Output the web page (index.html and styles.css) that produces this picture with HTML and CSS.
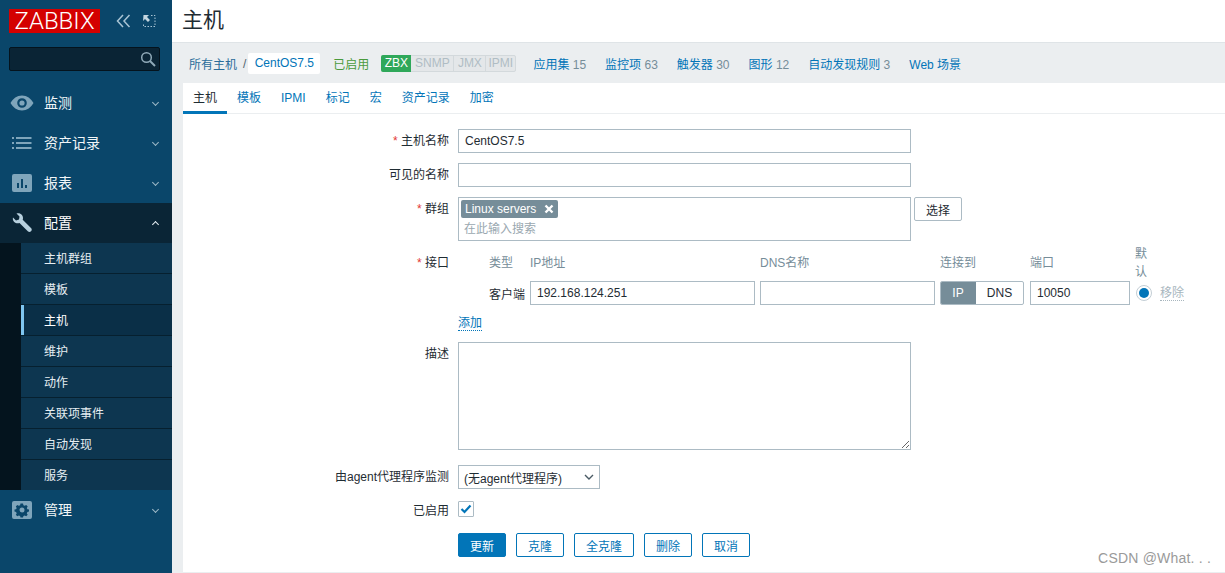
FILE: index.html
```html
<!DOCTYPE html>
<html lang="zh">
<head>
<meta charset="utf-8">
<title>主机</title>
<link rel="stylesheet" href="styles.css">
</head>
<body>
<div class="app">
  <aside class="sidebar">
    <div class="brand">
      <div class="logo">ZABBIX</div>
      <svg class="brand-icon collapse" width="15" height="14" viewBox="0 0 15 14"><path d="M7 1 1.500 7 7 13M13.500 1 8 7l5.500 6" fill="none" stroke="#a9c4d4" stroke-width="1.500"/></svg>
      <svg class="brand-icon expand" width="14" height="14" viewBox="0 0 14 14"><path d="M1.500 1 7 1 5 3 8 6 6 8 3 5 1 7Z" fill="#c4d6e0"/><path d="M9 1.500h4v11H1.500V9" fill="none" stroke="#a9c4d4" stroke-dasharray="1.500 1.500"/></svg>
    </div>
    <div class="search">
      <svg width="16" height="16" viewBox="0 0 16 16"><circle cx="6.500" cy="6.500" r="4.800" fill="none" stroke="#8fa9b8" stroke-width="1.500"/><path d="M10 10l5 5" stroke="#8fa9b8" stroke-width="2"/></svg>
    </div>
    <nav class="menu">
      <div class="menu-item">
        <svg class="menu-icon" width="24" height="18" viewBox="0 0 24 18"><path fill-rule="evenodd" d="M12 1.500c5 0 9 3 11.500 7.500C21 13.500 17 16.500 12 16.500S3 13.500 .5 9C3 4.500 7 1.500 12 1.500Zm0 2.700a4.800 4.800 0 1 0 0 9.600 4.800 4.800 0 0 0 0-9.600Z" fill="#7fa5bb"/><circle cx="12" cy="9" r="2.600" fill="#7fa5bb"/></svg>
        <span>监测</span><i class="chev"></i>
      </div>
      <div class="menu-item">
        <svg class="menu-icon" width="24" height="18" viewBox="0 0 24 18"><path d="M2 3h2v2H2zM2 8h2v2H2zM2 13h2v2H2zM6 3h15.500v2H6zM6 8h15.500v2H6zM6 13h15.500v2H6z" fill="#7fa5bb"/></svg>
        <span>资产记录</span><i class="chev"></i>
      </div>
      <div class="menu-item">
        <svg class="menu-icon" width="24" height="18" viewBox="0 0 24 18"><path fill-rule="evenodd" d="M4 0h16a2 2 0 0 1 2 2v14a2 2 0 0 1-2 2H4a2 2 0 0 1-2-2V2a2 2 0 0 1 2-2Zm3 9v5h2V9Zm4-4v9h2V5Zm4 6v3h2v-3Z" fill="#7fa5bb"/></svg>
        <span>报表</span><i class="chev"></i>
      </div>
      <div class="menu-item open">
        <svg class="menu-icon" width="24" height="20" viewBox="0 0 20 20"><path d="M1 4.500 4 7.500 7 6.500 7.500 3.500 4.500.5C7.500-.5 11 1.500 11 5c0 .7-.1 1.200-.3 1.800l8.300 8.200c1 1 1 2.300 0 3.200-.9 1-2.200 1-3.200 0L7.500 10c-.6.200-1.100.3-1.800.3C2.500 10.300.2 7.500 1 4.500Z" fill="#b7d0de"/></svg>
        <span>配置</span><i class="chev up"></i>
      </div>
      <div class="submenu">
        <div class="sub-item">主机群组</div>
        <div class="sub-item">模板</div>
        <div class="sub-item active">主机</div>
        <div class="sub-item">维护</div>
        <div class="sub-item">动作</div>
        <div class="sub-item">关联项事件</div>
        <div class="sub-item">自动发现</div>
        <div class="sub-item">服务</div>
      </div>
      <div class="menu-item">
        <svg class="menu-icon" width="24" height="18" viewBox="0 0 24 18"><path fill-rule="evenodd" d="M4 0h16a2 2 0 0 1 2 2v14a2 2 0 0 1-2 2H4a2 2 0 0 1-2-2V2a2 2 0 0 1 2-2Zm6.500 2.500-.4 1.700-1.300.6-1.500-.9-1.500 1.500.9 1.500-.6 1.300-1.600.4v2l1.600.5.6 1.300-.9 1.400 1.500 1.500 1.500-.9 1.300.6.4 1.500h2.500l.4-1.500 1.300-.6 1.500.9 1.500-1.500-.9-1.400.6-1.300 1.600-.5v-2l-1.600-.4-.6-1.300.9-1.500-1.500-1.500-1.500.9-1.300-.6-.4-1.700ZM12 6.500a2.500 2.500 0 1 1 0 5 2.500 2.500 0 0 1 0-5Z" fill="#7fa5bb"/></svg>
        <span>管理</span><i class="chev"></i>
      </div>
    </nav>
  </aside>

  <main class="main">
    <header class="page-header"><h1>主机</h1></header>

    <div class="crumbs">
      <a class="crumb-link">所有主机</a>
      <span class="slash">/</span>
      <a class="crumb-current">CentOS7.5</a>
      <span class="status">已启用</span>
      <div class="badges">
        <span class="badge on">ZBX</span><span class="badge">SNMP</span><span class="badge">JMX</span><span class="badge">IPMI</span>
      </div>
      <div class="crumb-list">
        <span><a>应用集</a> <em>15</em></span>
        <span><a>监控项</a> <em>63</em></span>
        <span><a>触发器</a> <em>30</em></span>
        <span><a>图形</a> <em>12</em></span>
        <span><a>自动发现规则</a> <em>3</em></span>
        <span><a>Web 场景</a></span>
      </div>
    </div>

    <section class="card">
      <div class="tabs">
        <a class="tab active">主机</a>
        <a class="tab">模板</a>
        <a class="tab">IPMI</a>
        <a class="tab">标记</a>
        <a class="tab">宏</a>
        <a class="tab">资产记录</a>
        <a class="tab">加密</a>
      </div>

      <form class="form">
        <label class="label"><b>*</b> 主机名称</label>
        <input class="input wide" value="CentOS7.5">

        <label class="label">可见的名称</label>
        <input class="input wide" value="">

        <label class="label"><b>*</b> 群组</label>
        <div class="group-row">
          <div class="multiselect">
            <span class="tag">Linux servers
              <svg width="10" height="10" viewBox="0 0 10 10"><path d="M1.500 1.500l7 7M8.500 1.500l-7 7" stroke="#fff" stroke-width="2.400"/></svg>
            </span>
            <span class="placeholder">在此输入搜索</span>
          </div>
          <button type="button" class="btn small">选择</button>
        </div>

        <label class="label"><b>*</b> 接口</label>
        <div class="iface">
          <div class="iface-grid">
            <span class="th">类型</span>
            <span class="th">IP地址</span>
            <span class="th">DNS名称</span>
            <span class="th">连接到</span>
            <span class="th">端口</span>
            <span class="th narrow">默认</span>
            <span></span>
            <span class="td">客户端</span>
            <input class="input fill" value="192.168.124.251">
            <input class="input fill" value="">
            <div class="segment"><span class="seg on">IP</span><span class="seg">DNS</span></div>
            <input class="input fill" value="10050">
            <span class="radio"></span>
            <a class="remove">移除</a>
          </div>
          <a class="add">添加</a>
        </div>

        <label class="label">描述</label>
        <textarea class="textarea"></textarea>

        <label class="label offset">由agent代理程序监测</label>
        <div class="select">
          <span>(无agent代理程序)</span>
          <svg width="10" height="6" viewBox="0 0 10 6"><path d="M1 1l4 4 4-4" fill="none" stroke="#4a5a64" stroke-width="1.400"/></svg>
        </div>

        <label class="label">已启用</label>
        <span class="check">
          <svg width="12" height="10" viewBox="0 0 12 10"><path d="M1.500 5l3 3 6-6.500" fill="none" stroke="#0275b8" stroke-width="2.200"/></svg>
        </span>

        <span></span>
        <div class="actions">
          <button type="button" class="btn primary">更新</button>
          <button type="button" class="btn outline">克隆</button>
          <button type="button" class="btn outline">全克隆</button>
          <button type="button" class="btn outline">删除</button>
          <button type="button" class="btn outline">取消</button>
        </div>
      </form>
    </section>
  </main>
</div>
<div class="watermark">CSDN @What. . .</div>
</body>
</html>
```
FILE: styles.css
```css
* { box-sizing: border-box; }
html, body { margin: 0; height: 573px; overflow: hidden; }
body {
  font-family: "Liberation Sans", "Noto Sans CJK SC", sans-serif;
  font-size: 12px;
  color: #1f2c33;
  background: #ebeef0;
}
.app { display: flex; height: 573px; }

/* sidebar */
.sidebar { width: 172px; flex: none; background: #0a466a; display: flex; flex-direction: column; }
.brand { display: flex; align-items: center; padding: 9px 0 0 9px; height: 33px; }
.logo {
  width: 91px; height: 24px; background: #d40000; color: #fff;
  font-family: Roboto, "Liberation Sans", sans-serif; font-weight: 300;
  font-size: 24px; line-height: 25px; text-align: center;
}
.brand-icon { flex: none; }
.collapse { margin-left: 16px; }
.expand { margin-left: 11px; }
.search {
  margin: 14px 12px 0 9px; height: 24px; background: #0a2435;
  border: 1px solid #04131d; border-radius: 2px;
  display: flex; align-items: center; justify-content: flex-end; padding-right: 3px;
}
.menu { margin-top: 12px; display: flex; flex-direction: column; }
.menu-item {
  height: 40px; display: flex; align-items: center; padding-left: 10px;
  color: #f2f6f8; font-size: 14px;
}
.menu-item.open { background: #0a2536; color: #fff; }
.menu-icon { flex: none; margin-right: 10px; }
.menu-item span { flex: 1; padding-bottom: 2px; }
.chev {
  width: 5px; height: 5px; margin-right: 14px; margin-top: -1px;
  border-right: 1px solid #9db8c6; border-bottom: 1px solid #9db8c6; transform: rotate(45deg);
}
.chev.up { margin-top: 3px; border-color: #e4edf2; transform: rotate(225deg); }
.submenu { background: #04141e; padding-left: 21px; height: 247px; }
.sub-item {
  height: 31px; line-height: 32px; padding-left: 23px; color: #e6eef2;
  background: #0d3650; border-bottom: 1px solid #06202f;
}
.sub-item:last-child { height: 30px; border-bottom: 0; }
.sub-item.active { background: #0a2f47; color: #fff; box-shadow: inset 3px 0 0 #7fc6f0; }

/* main */
.main { flex: 1; min-width: 0; display: flex; flex-direction: column; }
.page-header { height: 43px; background: #fff; border-bottom: 1px solid #dfe4e7; padding-left: 10px; display: flex; align-items: center; }
.page-header h1 { margin: 0 0 6px; font-size: 21px; font-weight: 400; color: #1f2c33; }
.crumbs { height: 40px; padding: 1px 0 0 17px; display: flex; align-items: center; color: #768d99; }
.crumbs a { color: #0275b8; }
.crumbs .crumb-link { color: #2a6c9a; }
.slash { margin: 0 2px 0 6px; color: #52646e; }
.crumb-current { background: #fff; height: 21px; line-height: 21px; width: 72px; text-align: center; border-radius: 2px; margin-right: 13px; }
.status { color: #4a9a3c; margin-right: 12px; }
.badges { display: flex; height: 17px; background: #e4e7e9; border: 1px solid #d3d9dc; border-radius: 2px; margin-right: 17px; }
.badge { text-align: center; width: 32px; line-height: 15px; color: #b0bdc4; border-left: 1px solid #d3d9dc; }
.badge:nth-child(2) { width: 42px; border-left: 0; }
.badge:nth-child(4) { width: 30px; }
.badge.on { background: #2fa85a; color: #fff; border: 0; width: 30px; margin: -1px 0 -1px -1px; line-height: 17px; border-radius: 2px 0 0 2px; }
.crumb-list { display: flex; gap: 19px; }
.crumb-list em { font-style: normal; color: #768d99; }

.card { flex: 1; margin-left: 11px; margin-bottom: 1px; background: #fff; }
.tabs { height: 31px; display: flex; border-bottom: 1px solid #ebeef0; }
.tab { padding: 0 10px; line-height: 31px; height: 31px; color: #0275b8; }
.tab.active { color: #1f2c33; border-bottom: 3px solid #0275b8; }

.form {
  display: grid; grid-template-columns: 266px 1fr; column-gap: 9px; row-gap: 10px;
  padding-top: 15px; align-items: start;
}
.label { text-align: right; line-height: 24px; color: #1f2c33; }
.label b { color: #e33734; font-weight: 400; }
.offset { margin-top: 5px; }
.input {
  height: 24px; border: 1px solid #acbbc4; padding: 0 5px 0 6px; font: inherit; color: #1f2c33; background: #fff; border-radius: 0; outline: 0;
}
.wide { width: 453px; }
.fill { width: 100%; }
.group-row { display: flex; gap: 3px; align-items: flex-start; }
.multiselect {
  width: 453px; height: 44px; border: 1px solid #acbbc4; padding: 2px;
  display: flex; flex-direction: column; align-items: flex-start;
}
.tag {
  background: #768d99; color: #fff; height: 18px; line-height: 17px; padding: 0 4px; border-radius: 2px;
  display: flex; align-items: center; gap: 8px;
}
.placeholder { color: #9aa8b0; margin: 2px 0 0 3px; line-height: 18px; }
.btn { height: 24px; font: inherit; padding: 0; border-radius: 2px; cursor: pointer; background: #fff; }
.small { width: 48px; border: 1px solid #acbbc4; color: #1f2c33; }

.iface { display: flex; flex-direction: column; height: 81px; }
.iface-grid {
  display: grid; padding-left: 31px; column-gap: 5px; row-gap: 6px; align-items: center;
  grid-template-columns: 36px 225px 175px 85px 100px 20px auto; grid-template-rows: 24px 24px;
}
.th { color: #768d99; line-height: 18px; white-space: nowrap; }
.th.narrow { white-space: normal; width: 13px; }
.td { color: #1f2c33; white-space: nowrap; }
.segment { display: flex; width: 84px; height: 24px; border: 1px solid #acbbc4; border-radius: 2px; overflow: hidden; }
.seg { flex: 1; text-align: center; line-height: 22px; color: #1f2c33; }
.seg.on { flex: none; width: 36px; margin: -1px 0 -1px -1px; line-height: 24px; background: #768d99; color: #fff; }
.radio {
  width: 16px; height: 16px; margin: -1px 0 0 1px; border: 1px solid #c3ced5; border-radius: 50%; background: #fff;
  display: flex; align-items: center; justify-content: center;
}
.radio::after { content: ""; width: 10px; height: 10px; border-radius: 50%; background: #0275b8; }
.remove { color: #a8b6be; border-bottom: 1px dotted #a8b6be; line-height: 13px; margin-top: 2px; justify-self: start; }
.add {
  align-self: flex-start; margin-top: 11px; color: #0275b8; border-bottom: 1px dotted #0275b8; line-height: 14px; height: 15px;
}
.textarea { display: block; width: 453px; height: 108px; border: 1px solid #acbbc4; border-radius: 0; margin: 0; padding: 4px; font: inherit; outline: 0; }
.select {
  width: 142px; height: 24px; margin-top: 5px; border: 1px solid #acbbc4; padding: 0 5px;
  display: flex; align-items: center; justify-content: space-between; background: #fff;
}
.check {
  width: 16px; height: 16px; margin-top: 2px; border: 1px solid #acbbc4; border-radius: 1px; display: flex; align-items: center; justify-content: center;
}
.actions { display: flex; gap: 10px; }
.primary { width: 48px; background: #0275b8; border: 1px solid #0275b8; color: #fff; }
.outline { border: 1px solid #0275b8; color: #0275b8; padding: 0 11px; }
.watermark {
  position: absolute; right: 14px; bottom: 7px; color: #9a9a9a; font-size: 14px; letter-spacing: 0.2px;
}
```
